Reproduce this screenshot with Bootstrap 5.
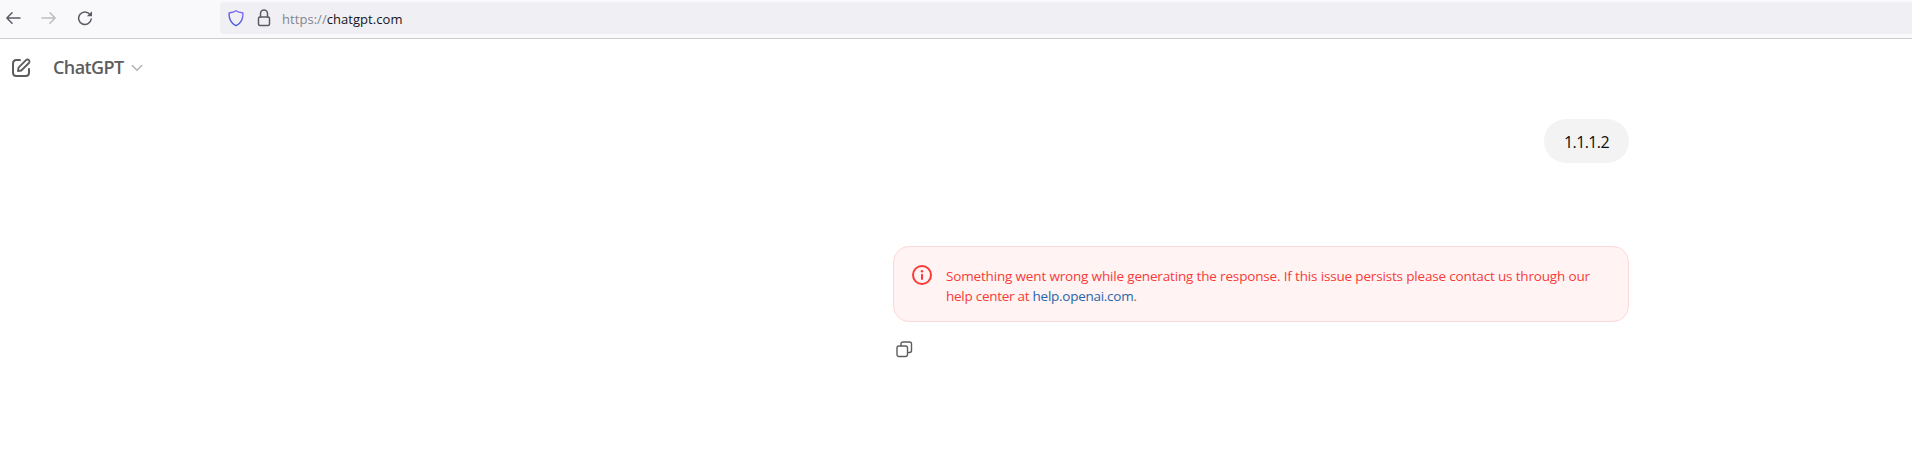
<!DOCTYPE html>
<html lang="en">
<head>
<meta charset="utf-8">
<title>ChatGPT</title>
<link href="https://cdn.jsdelivr.net/npm/bootstrap@5.3.0/dist/css/bootstrap.min.css" rel="stylesheet">
<style>
body{font-family:"Segoe UI","Open Sans","Noto Sans",sans-serif;height:474px;overflow:hidden;background:#fff;color:#0d0d0d}
svg{display:block;flex:none;fill:none;stroke-linecap:round;stroke-linejoin:round}
.browser-bar{height:39px;background:#f9f9fb;border-bottom:1px solid #ccc;padding:2px 0 0 6px}
.nav-icons{width:214px;height:32px;gap:20px}
.address{height:32px;background:#f0f0f4;border-radius:4px 0 0 4px;padding-left:8px;font-size:13px;color:#15141a}
.address .scheme{color:#85858c}
.lock{margin-left:13px}
.url{margin-left:11px;padding-top:2px;line-height:20px;letter-spacing:.05px}
.app-head{height:60px;padding:0 0 2px 11px;color:#5d5d5d}
.model{font-size:18px;font-weight:600;line-height:28px;margin-left:22px;padding-bottom:2px;letter-spacing:-.6px}
.chevron{margin-left:7px}
.thread{width:736px;margin-left:893px;padding-top:20px}
.bubble{width:85px;height:44px;border-radius:22px;background:#f3f3f3;font-size:16px;line-height:24px;letter-spacing:-.6px;padding-top:2px}
.alert-error{height:76px;margin-top:83px;border:1px solid #fcd9d9;border-radius:16px;background:#fff4f3;color:#f93a37;padding:18px 0 0 18px;font-size:13.5px;line-height:20px}
.alert-error p{margin:1px 0 0 14px;white-space:nowrap;letter-spacing:-.27px}
.alert-error .lead-line{letter-spacing:-.165px}
.alert-error a{color:#2964aa;text-decoration:none}
.copy{margin:19px 0 0 3px}
</style>
<script src="https://cdn.jsdelivr.net/npm/bootstrap@5.3.0/dist/js/bootstrap.bundle.min.js"></script>
</head>
<body>
<header class="browser-bar d-flex">
  <div class="nav-icons d-flex align-items-center">
    <svg width="15" height="14" stroke="#5b5b66" stroke-width="1.5"><path d="M1 7h13M6 1.7.9 7 6 12.3"/></svg>
    <svg width="15" height="14" stroke="#bdbdc1" stroke-width="1.5"><path d="M1 7h13M9 1.7 14.1 7 9 12.3"/></svg>
    <svg width="17" height="16" viewBox="-1 0 17 16" stroke="#5b5b66" stroke-width="1.5"><path d="M13.2 4.800A6.300 6.300 0 1 0 14.200 9"/><path d="M15 1.300v5H9.800z" fill="#5b5b66" stroke="none"/></svg>
  </div>
  <div class="address d-flex align-items-center flex-grow-1">
    <svg width="16" height="18" viewBox="0 0 16 18" stroke="url(#shield)" stroke-width="1.4"><defs><linearGradient id="shield" x1="0" y1="1" x2=".5" y2="0"><stop stop-color="#3659d5"/><stop offset="1" stop-color="#8067f2"/></linearGradient></defs><path d="M8 1.7C6.300 2.900 4 3.500 1.700 3.700Q1 3.800 1 4.600C1 10.500 3 14.300 7.400 16.400Q8 16.700 8.600 16.400C13 14.300 15 10.500 15 4.600Q15 3.800 14.300 3.700C12 3.500 9.700 2.900 8 1.700Z"/></svg>
    <svg class="lock" width="14" height="18" viewBox="0 0 14 18" stroke="#5b5b66" stroke-width="1.5"><rect x="1.500" y="8" width="11" height="8.500" rx="1.500"/><path d="M3.500 8V4.600a3.500 3.500 0 0 1 7 0V8"/></svg>
    <span class="url"><span class="scheme">https://</span>chatgpt.com</span>
  </div>
</header>
<div class="app-head d-flex align-items-center">
  <svg width="20" height="20" viewBox="0 0 20 20" stroke="#5d5d5d" stroke-width="2"><path d="M9 2H5.500Q2 2 2 5.500v9Q2 18 5.500 18h9q3.500 0 3.500-3.500V11"/><path d="M7 13l.5-3.300L15 2.100a1.950 1.950 0 0 1 2.900 2.900L10.300 12.500Z" stroke-width="1.800"/></svg>
  <span class="model">ChatGPT</span>
  <svg class="chevron" width="12" height="8" stroke="#b4b4b4" stroke-width="1.500"><path d="M1.200 1.500 6 6.300l4.800-4.800"/></svg>
</div>
<main class="thread">
  <div class="bubble d-flex align-items-center justify-content-center ms-auto">1.1.1.2</div>
  <div class="alert-error d-flex align-items-start">
    <svg width="20" height="20" stroke="#f93a37" stroke-width="2"><circle cx="10" cy="10" r="9"/><path d="M10 9.700v4.300" /><circle cx="10" cy="6.200" r="1.200" fill="#f93a37" stroke="none"/></svg>
    <p><span class="lead-line">Something went wrong while generating the response. If this issue persists please contact us through our</span><br>help center at <a href="#">help.openai.com</a>.</p>
  </div>
  <svg class="copy" width="17" height="17" viewBox="0 0 17 17" stroke="#5d5d5d" stroke-width="1.400"><rect x="1" y="5" width="10.500" height="10.500" rx="2"/><path d="M5 4.500V3q0-2 2-2h6.500q2 0 2 2v6.500q0 2-2 2H12"/></svg>
</main>
</body>
</html>
